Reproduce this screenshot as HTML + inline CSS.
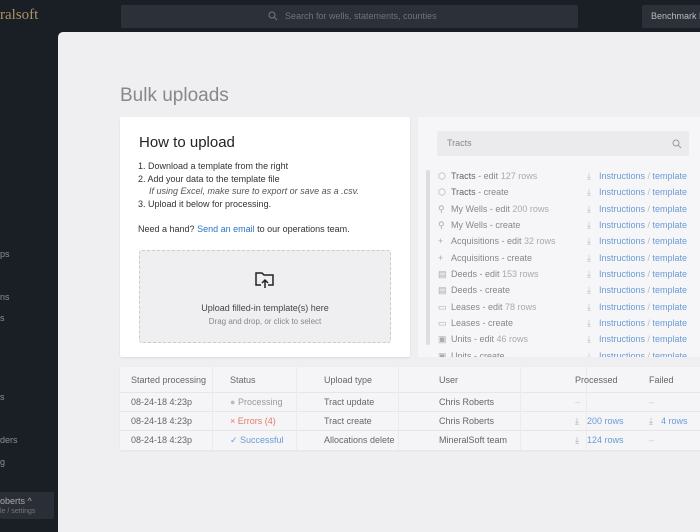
<!DOCTYPE html>
<html><head><style>
*{margin:0;padding:0;box-sizing:border-box}
body{width:700px;height:525px;overflow:hidden;background:#1a1e25;font-family:"Liberation Sans",sans-serif;position:relative;color:#333}
.abs{position:absolute;white-space:nowrap}
.side{color:#8a8f98;font-size:9px}
.main{position:absolute;left:58px;top:32px;width:650px;height:500px;background:#efeff1;border-top-left-radius:5px}
.list .r{position:absolute;left:438px;font-size:9px;color:#888;white-space:nowrap}
.list .r b{font-weight:normal;color:#777}
.list .r i{font-style:normal;color:#aaa;display:inline-block;width:13px}
.list .r i.c{color:#aaa;display:inline;width:auto}
.list .l{position:absolute;left:587px;font-size:9px;color:#6a9bd6;white-space:nowrap}
.list .l s{text-decoration:none;color:#bbb}
.list .l s.d{display:inline-block;width:12px}
.th,.td{position:absolute;font-size:9px;white-space:nowrap}
.th{color:#666}.td{color:#666}
</style></head><body>
<div class="abs" style="left:0;top:7px;font-family:'Liberation Serif',serif;font-size:15px;color:#a89466">ralsoft</div>
<div class="abs" style="left:121px;top:5px;width:457px;height:23px;background:#2c3039;border-radius:2px"></div>
<svg class="abs" style="left:268px;top:11px" width="10" height="10" viewBox="0 0 10 10"><circle cx="4" cy="4" r="3" fill="none" stroke="#777" stroke-width="1"/><path d="M6.2 6.2L9 9" stroke="#777"/></svg>
<div class="abs" style="left:285px;top:11px;font-size:9px;color:#6e737c">Search for wells, statements, counties</div>
<div class="abs" style="left:642px;top:5px;width:60px;height:23px;background:#2c3039;border-radius:2px"></div>
<div class="abs" style="left:651px;top:11px;font-size:9px;color:#bbb">Benchmark R</div>
<div class="abs side" style="left:0;top:249px">ps</div>
<div class="abs side" style="left:0;top:292px">ns</div>
<div class="abs side" style="left:0;top:313px">s</div>
<div class="abs side" style="left:0;top:392px">s</div>
<div class="abs side" style="left:0;top:435px">ders</div>
<div class="abs side" style="left:0;top:457px">g</div>
<div class="abs" style="left:0;top:492px;width:54px;height:27px;background:#2a2e36;border-radius:2px"></div>
<div class="abs" style="left:0;top:496px;font-size:9px;color:#aaa">oberts ^</div>
<div class="abs" style="left:0;top:508px;font-size:7px;color:#777">le / settings</div>
<div class="main"></div>
<div class="abs" style="left:120px;top:85px;font-size:19px;color:#888">Bulk uploads</div>
<div class="abs" style="left:120px;top:117px;width:290px;height:240px;background:#fff;border-radius:2px;box-shadow:0 1px 2px rgba(0,0,0,.08)"></div>
<div class="abs" style="left:139px;top:134px;font-size:15px;color:#222">How to upload</div>
<div class="abs" style="left:138px;top:160px;font-size:9px;color:#333;line-height:12.7px">1. Download a template from the right<br>2. Add your data to the template file<br><span style="font-style:italic;color:#555;padding-left:11px">If using Excel, make sure to export or save as a .csv.</span><br>3. Upload it below for processing.</div>
<div class="abs" style="left:138px;top:224px;font-size:9px;color:#333">Need a hand? <span style="color:#2a76c8">Send an email</span> to our operations team.</div>
<div class="abs" style="left:139px;top:250px;width:252px;height:93px;background:#efeff1;border:1px dashed #ccc;border-radius:3px"></div>
<svg class="abs" style="left:255px;top:271px" width="20" height="18" viewBox="0 0 20 18"><path d="M6 14H1V2h6l2 2h9v10h-5" fill="none" stroke="#222" stroke-width="1.5"/><path d="M10 17V9M7 12l3-3 3 3" fill="none" stroke="#222" stroke-width="1.5"/></svg>
<div class="abs" style="left:139px;width:252px;text-align:center;top:303px;font-size:9px;color:#444">Upload filled-in template(s) here</div>
<div class="abs" style="left:139px;width:252px;text-align:center;top:317px;font-size:8px;color:#888">Drag and drop, or click to select</div>
<div class="abs" style="left:418px;top:117px;width:290px;height:240px;background:#f6f6f8"></div>
<div class="abs" style="left:437px;top:131px;width:252px;height:25px;background:#ebebed;border-radius:2px"></div>
<div class="abs" style="left:447px;top:138px;font-size:9px;color:#888">Tracts</div>
<svg class="abs" style="left:672px;top:139px" width="10" height="10" viewBox="0 0 10 10"><circle cx="4" cy="4" r="3" fill="none" stroke="#999"/><path d="M6.2 6.2L9 9" stroke="#999"/></svg>
<div class="abs" style="left:426px;top:170px;width:4px;height:175px;background:#ddd;border-radius:2px"></div>
<div class="list">
<div class="r" style="top:171px"><i>⬡</i><b style="color:#666">Tracts</b> - edit <i class="c">127 rows</i></div>
<div class="r" style="top:187px"><i>⬡</i><b style="color:#666">Tracts</b> - create</div>
<div class="r" style="top:204px"><i>⚲</i>My Wells - edit <i class="c">200 rows</i></div>
<div class="r" style="top:220px"><i>⚲</i>My Wells - create</div>
<div class="r" style="top:236px"><i>+</i>Acquisitions - edit <i class="c">32 rows</i></div>
<div class="r" style="top:253px"><i>+</i>Acquisitions - create</div>
<div class="r" style="top:269px"><i>▤</i>Deeds - edit <i class="c">153 rows</i></div>
<div class="r" style="top:285px"><i>▤</i>Deeds - create</div>
<div class="r" style="top:302px"><i>▭</i>Leases - edit <i class="c">78 rows</i></div>
<div class="r" style="top:318px"><i>▭</i>Leases - create</div>
<div class="r" style="top:334px"><i>▣</i>Units - edit <i class="c">46 rows</i></div>
<div class="r" style="top:351px;height:6px;overflow:hidden"><i>▣</i>Units - create</div>
<div class="l" style="top:171px"><s class="d">⤓</s>Instructions <s>/</s> template</div>
<div class="l" style="top:187px"><s class="d">⤓</s>Instructions <s>/</s> template</div>
<div class="l" style="top:204px"><s class="d">⤓</s>Instructions <s>/</s> template</div>
<div class="l" style="top:220px"><s class="d">⤓</s>Instructions <s>/</s> template</div>
<div class="l" style="top:236px"><s class="d">⤓</s>Instructions <s>/</s> template</div>
<div class="l" style="top:253px"><s class="d">⤓</s>Instructions <s>/</s> template</div>
<div class="l" style="top:269px"><s class="d">⤓</s>Instructions <s>/</s> template</div>
<div class="l" style="top:285px"><s class="d">⤓</s>Instructions <s>/</s> template</div>
<div class="l" style="top:302px"><s class="d">⤓</s>Instructions <s>/</s> template</div>
<div class="l" style="top:318px"><s class="d">⤓</s>Instructions <s>/</s> template</div>
<div class="l" style="top:334px"><s class="d">⤓</s>Instructions <s>/</s> template</div>
<div class="l" style="top:351px;height:6px;overflow:hidden"><s class="d">⤓</s>Instructions <s>/</s> template</div>
</div>
<div class="abs" style="left:120px;top:367px;width:590px;height:83px;background:#f5f5f7;border-radius:2px;box-shadow:0 1px 2px rgba(0,0,0,.05)"></div>
<div class="abs" style="left:120px;top:392px;width:590px;height:1px;background:#e6e6e8"></div>
<div class="abs" style="left:120px;top:411px;width:590px;height:1px;background:#e6e6e8"></div>
<div class="abs" style="left:120px;top:430px;width:590px;height:1px;background:#e6e6e8"></div>
<div class="abs" style="left:212px;top:367px;width:1px;height:83px;background:#ebebed"></div>
<div class="abs" style="left:296px;top:367px;width:1px;height:83px;background:#ebebed"></div>
<div class="abs" style="left:398px;top:367px;width:1px;height:83px;background:#ebebed"></div>
<div class="abs" style="left:520px;top:367px;width:1px;height:83px;background:#ebebed"></div>
<div class="abs" style="left:586px;top:367px;width:1px;height:83px;background:#ebebed"></div>
<div class="th" style="left:131px;top:375px">Started processing</div>
<div class="th" style="left:230px;top:375px">Status</div>
<div class="th" style="left:324px;top:375px">Upload type</div>
<div class="th" style="left:439px;top:375px">User</div>
<div class="th" style="left:575px;top:375px">Processed</div>
<div class="th" style="left:649px;top:375px">Failed</div>
<div class="td" style="left:131px;top:397px">08-24-18 4:23p</div>
<div class="td" style="left:230px;top:397px;color:#999"><span style="color:#bbb">●</span> Processing</div>
<div class="td" style="left:324px;top:397px">Tract update</div>
<div class="td" style="left:439px;top:397px">Chris Roberts</div>
<div class="td" style="left:575px;top:397px;color:#ccc">–</div>
<div class="td" style="left:649px;top:397px;color:#ccc">–</div>
<div class="td" style="left:131px;top:416px">08-24-18 4:23p</div>
<div class="td" style="left:230px;top:416px;color:#e07a6a">× Errors (4)</div>
<div class="td" style="left:324px;top:416px">Tract create</div>
<div class="td" style="left:439px;top:416px">Chris Roberts</div>
<div class="td" style="left:575px;top:416px;color:#6a9bd6"><span style="color:#aaa;display:inline-block;width:12px">⤓</span>200 rows</div>
<div class="td" style="left:649px;top:416px;color:#6a9bd6"><span style="color:#aaa;display:inline-block;width:12px">⤓</span>4 rows</div>
<div class="td" style="left:131px;top:435px">08-24-18 4:23p</div>
<div class="td" style="left:230px;top:435px;color:#6a9bd6">✓ Successful</div>
<div class="td" style="left:324px;top:435px">Allocations delete</div>
<div class="td" style="left:439px;top:435px">MineralSoft team</div>
<div class="td" style="left:575px;top:435px;color:#6a9bd6"><span style="color:#aaa;display:inline-block;width:12px">⤓</span>124 rows</div>
<div class="td" style="left:649px;top:435px;color:#ccc">–</div>
</body></html>
